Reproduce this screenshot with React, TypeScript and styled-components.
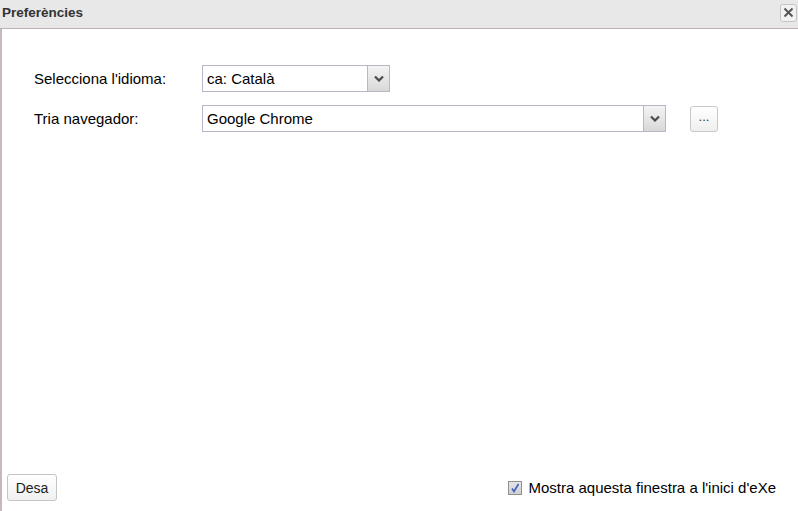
import styled, { createGlobalStyle } from "styled-components";

const GlobalStyle = createGlobalStyle`
  html, body {
    margin: 0;
    padding: 0;
    background: #fff;
  }
  body {
    font-family: "Liberation Sans", Arial, sans-serif;
    color: #000;
  }
`;

const Window = styled.div`
  width: 798px;
  height: 511px;
  display: flex;
  flex-direction: column;
  box-sizing: border-box;
  overflow: hidden;
`;

const TitleBar = styled.div`
  height: 29px;
  flex: none;
  display: flex;
  align-items: center;
  justify-content: space-between;
  background: #e8e8e8;
  border-bottom: 1px solid #bcb2b2;
  padding: 0 1px 0 2px;
  box-sizing: border-box;
`;

const Title = styled.span`
  font-size: 13.5px;
  font-weight: bold;
  color: #333;
  margin-top: -3px;
`;

const CloseButton = styled.button`
  width: 17px;
  height: 18px;
  padding: 0;
  margin-top: -3px;
  border: 1px solid #c4c4c4;
  border-radius: 3px;
  background: #f2f2f2;
  display: flex;
  align-items: center;
  justify-content: center;
`;

const Body = styled.div`
  flex: 1;
  display: flex;
  flex-direction: column;
  border-left: 2px solid #c6b9bb;
  padding: 36px 0 10px 32px;
`;

const Form = styled.div`
  display: grid;
  grid-template-columns: 168px auto 24px auto;
  row-gap: 13px;
  align-items: center;
  justify-content: start;
`;

const Label = styled.label`
  font-size: 15px;
  grid-column: 1;
`;

const Select = styled.div<{ $width: number }>`
  grid-column: 2;
  width: ${(p) => p.$width}px;
  height: 27px;
  box-sizing: border-box;
  border: 1px solid #b5b8c8;
  display: flex;
  align-items: stretch;
  background: #fff;
`;

const SelectValue = styled.span`
  flex: 1;
  font-size: 15px;
  padding-left: 4px;
  display: flex;
  align-items: center;
`;

const SelectArrow = styled.span`
  width: 21px;
  border-left: 1px solid #b5b8c8;
  background: linear-gradient(#f4f4f4, #d8d8d8);
  display: flex;
  align-items: center;
  justify-content: center;
`;

const SmallButton = styled.button`
  grid-column: 4;
  width: 28px;
  height: 26px;
  padding: 0 0 4px;
  border: 1px solid #c9c9c9;
  border-radius: 3px;
  background: linear-gradient(#fff, #efefef);
  font-family: inherit;
  font-size: 13px;
  color: #333;
`;

const Spacer = styled.div`
  flex: 1;
`;

const Footer = styled.div`
  display: flex;
  align-items: center;
  justify-content: space-between;
  margin-left: -27px;
  padding-right: 22px;
`;

const SaveButton = styled.button`
  height: 27px;
  width: 50px;
  padding: 0;
  border: 1px solid #c4c4c4;
  border-radius: 3px;
  background: linear-gradient(#fff, #f0f0f0);
  font-family: inherit;
  font-size: 14px;
  color: #222;
`;

const CheckRow = styled.label`
  display: flex;
  align-items: center;
  gap: 6px;
  font-size: 15px;
`;

const CheckBox = styled.span`
  width: 14px;
  height: 14px;
  box-sizing: border-box;
  border: 1px solid #8f8f8f;
  background: linear-gradient(#e6e6e6, #cfcfcf);
  display: flex;
  align-items: center;
  justify-content: center;
`;

const Arrow = () => (
  <svg width="10" height="7" viewBox="0 0 10 7">
    <path d="M1 1.5 L5 5.5 L9 1.5" fill="none" stroke="#4a4a4a" strokeWidth="2.2" />
  </svg>
);

function App() {
  return (
    <>
      <GlobalStyle />
      <Window>
        <TitleBar>
          <Title>Preferències</Title>
          <CloseButton aria-label="Tanca">
            <svg width="11" height="11" viewBox="0 0 11 11">
              <path d="M1.5 1.5 L9.5 9.5 M9.5 1.5 L1.5 9.5" stroke="#555" strokeWidth="2" />
            </svg>
          </CloseButton>
        </TitleBar>
        <Body>
          <Form>
            <Label>Selecciona l'idioma:</Label>
            <Select $width={188}>
              <SelectValue>ca: Català</SelectValue>
              <SelectArrow>
                <Arrow />
              </SelectArrow>
            </Select>
            <Label>Tria navegador:</Label>
            <Select $width={464}>
              <SelectValue>Google Chrome</SelectValue>
              <SelectArrow>
                <Arrow />
              </SelectArrow>
            </Select>
            <SmallButton>...</SmallButton>
          </Form>
          <Spacer />
          <Footer>
            <SaveButton>Desa</SaveButton>
            <CheckRow>
              <CheckBox>
                <svg width="10" height="10" viewBox="0 0 10 10">
                  <path d="M2 5.5 L4 8.5 L8.5 1" fill="none" stroke="#3b5fc7" strokeWidth="1.6" />
                </svg>
              </CheckBox>
              Mostra aquesta finestra a l'inici d'eXe
            </CheckRow>
          </Footer>
        </Body>
      </Window>
    </>
  );
}

export default App;
